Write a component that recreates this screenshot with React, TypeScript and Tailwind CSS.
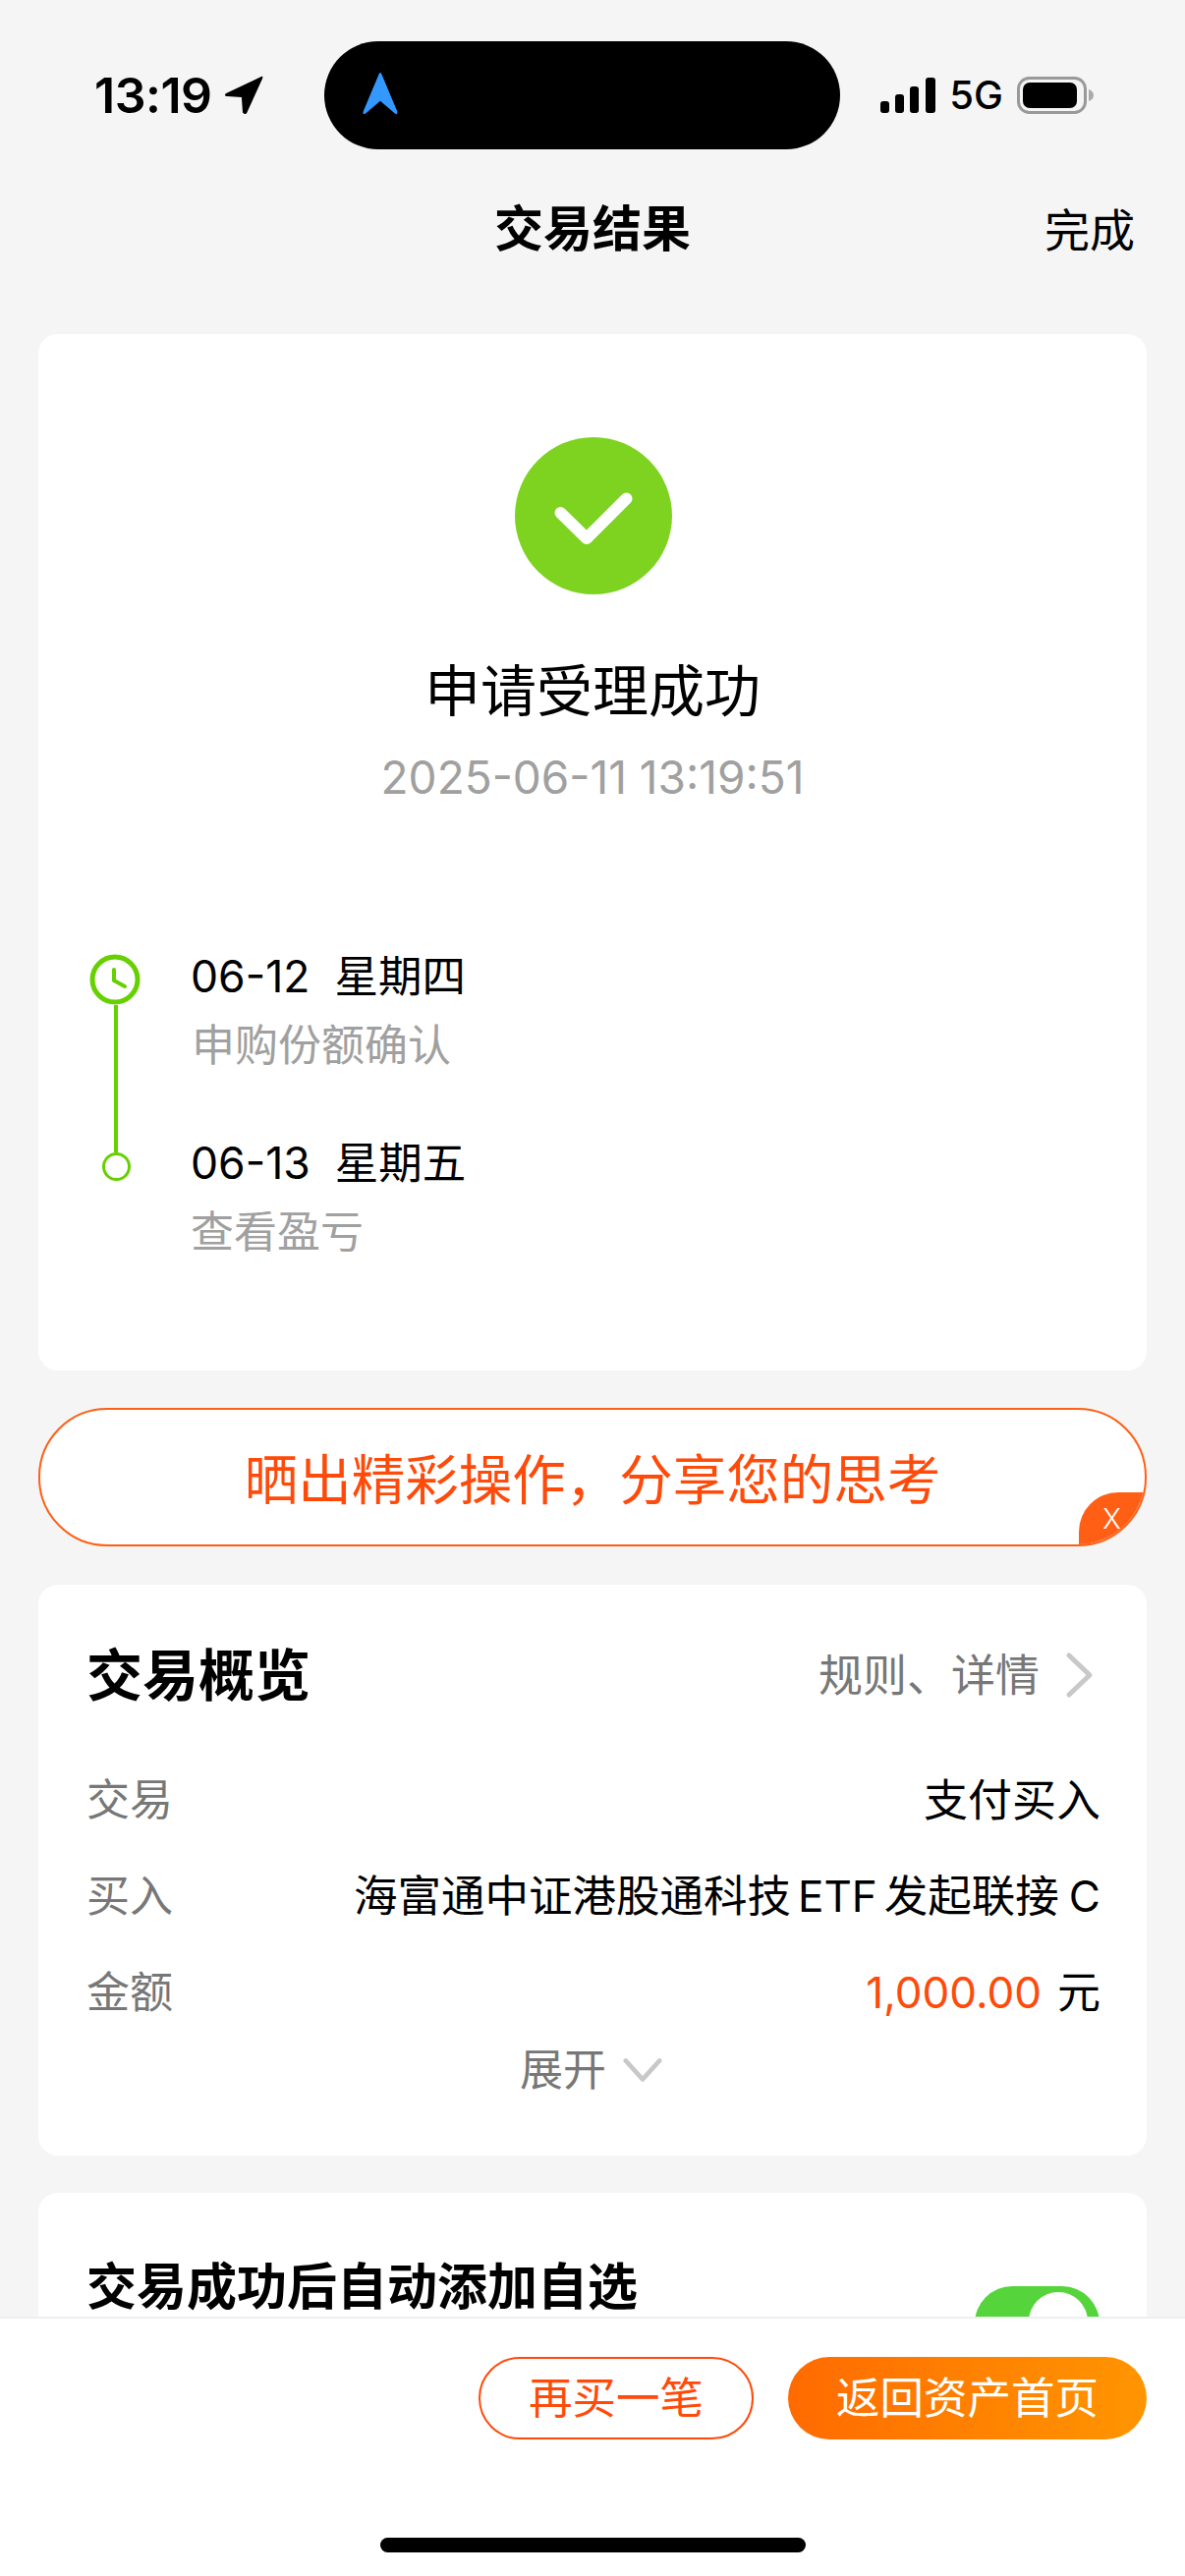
import React from "react";

const font = { fontFamily: '"Inter","Noto Sans CJK SC",sans-serif' };

function Row({ label, children }: { label: string; children: React.ReactNode }) {
  return (
    <div className="flex h-[98px] items-center justify-between text-[44px] leading-none">
      <span className="text-[#777777]">{label}</span>
      <span className="flex items-center text-black">{children}</span>
    </div>
  );
}

export default function App() {
  return (
    <div className="flex h-[2622px] w-[1206px] flex-col overflow-hidden bg-[#f5f5f5]" style={font}>
      <div className="min-h-0 flex-1 overflow-hidden">
        {/* status bar */}
        <div className="flex items-start pl-[96px] pr-[93px] pt-[42px]">
          <div className="flex h-[110px] w-[234px] items-center gap-[12px]">
            <span className="text-[50px] font-semibold leading-none tracking-[-0.5px] text-black">13:19</span>
            <svg width="40" height="40" viewBox="0 0 38 38"><path d="M36 1 2 17c-2 1-1 3 1 3l14 1 1 14c0 2 3 3 4 1L37 3c1-2 0-3-1-2Z" fill="#000" /></svg>
          </div>
          <div className="relative h-[110px] w-[525px] rounded-[55px] bg-black">
            <svg className="absolute left-[37px] top-[31px]" width="40" height="44" viewBox="0 0 40 46"><path d="M20 1c1 0 1 1 2 3l16 38c1 3-1 4-3 2L20 31 5 44c-2 2-4 1-3-2L18 4c1-2 1-3 2-3Z" fill="#3399ff" /></svg>
          </div>
          <div className="flex h-[110px] flex-1 items-center justify-end gap-[14px]">
            <svg width="56" height="36" viewBox="0 0 56 36">
              <rect x="0" y="24" width="9" height="12" rx="3" />
              <rect x="15" y="17" width="9" height="19" rx="3" />
              <rect x="30" y="9" width="9" height="27" rx="3" />
              <rect x="46" y="0" width="10" height="36" rx="3" />
            </svg>
            <span className="text-[40px] font-medium leading-none text-black">5G</span>
            <svg width="78" height="38" viewBox="0 0 78 38">
              <rect x="1.5" y="1.5" width="68" height="35" rx="11" fill="none" stroke="#999" strokeWidth="3" />
              <rect x="6" y="6" width="55" height="26" rx="7" fill="#000" />
              <path d="M73 13c3 1 5 3 5 6s-2 5-5 6Z" fill="#aaa" />
            </svg>
          </div>
        </div>

        {/* nav */}
        <div className="relative mt-[51px] flex h-[60px] items-center justify-center">
          <span className="text-[50px] font-bold leading-none text-black">交易结果</span>
          <span className="absolute right-[51px] top-[8px] text-[46px] leading-none text-black">完成</span>
        </div>

        {/* result card */}
        <div className="mx-[39px] mt-[77px] h-[1055px] rounded-[20px] bg-white">
          <div className="flex flex-col items-center pt-[105px]">
            <div className="ml-[2px] flex h-[160px] w-[160px] items-center justify-center rounded-full bg-[#7ed321]">
              <svg width="80" height="54" viewBox="0 0 80 54" className="mt-[6px]">
                <path d="M6.5 21 33 47 73.5 6.5" fill="none" stroke="#fff" strokeWidth="12" strokeLinecap="round" strokeLinejoin="round" />
              </svg>
            </div>
            <div className="mt-[70px] text-[57px] leading-none text-black">申请受理成功</div>
            <div className="mt-[36px] text-[46px] leading-none text-[#a0a0a0]">2025-06-11 13:19:51</div>
          </div>
          <div className="mt-[157px] flex pl-[52px]">
            <div className="flex w-[52px] flex-col items-center">
              <svg width="52" height="52" viewBox="0 0 52 52">
                <circle cx="26" cy="26" r="23" fill="none" stroke="#66d000" strokeWidth="5" />
                <path d="M25 16v11l11 6" fill="none" stroke="#66d000" strokeWidth="4" strokeLinecap="round" strokeLinejoin="round" />
              </svg>
              <div className="ml-[2px] h-[150px] w-[4px] bg-[#66d000]" />
              <div className="ml-[2px] h-[29px] w-[29px] rounded-full border-[3px] border-[#66d000]" />
            </div>
            <div className="ml-[51px] flex flex-col">
              <div className="h-[44px] text-[44.5px] leading-[46px] text-black">06-12&nbsp;&nbsp;星期四</div>
              <div className="mt-[26px] h-[44px] pl-[1px] text-[44px] leading-[46px] text-[#a0a0a0]">申购份额确认</div>
              <div className="mt-[76px] h-[44px] text-[44.5px] leading-[46px] text-black">06-13&nbsp;&nbsp;星期五</div>
              <div className="mt-[26px] h-[44px] text-[44px] leading-[46px] text-[#a0a0a0]">查看盈亏</div>
            </div>
          </div>
        </div>

        {/* share banner */}
        <div className="relative mx-[39px] mt-[38px] flex h-[141px] items-center justify-center overflow-hidden rounded-[70px] border-2 border-[#ff5f15] bg-white pt-[5px]">
          <span className="text-[54.5px] leading-none text-[#ff4a0a]">晒出精彩操作，分享您的思考</span>
          <div className="absolute bottom-0 right-0 flex h-[53px] w-[67px] items-center justify-center rounded-tl-[40px] bg-[#ff5f15] text-[28px] font-light leading-none text-white">X</div>
        </div>

        {/* overview card */}
        <div className="mx-[39px] mt-[39px] h-[581px] rounded-[20px] bg-white pl-[49px] pr-[47px] pt-[62px]">
          <div className="flex h-[60px] items-center justify-between">
            <span className="text-[57px] font-bold leading-none text-black">交易概览</span>
            <div className="flex items-center">
              <span className="text-[45px] leading-none text-[#777777]">规则、详情</span>
              <svg width="30" height="48" viewBox="0 0 30 48" className="ml-[26px] mr-[6px]">
                <path d="M4 4 25 24 4 44" fill="none" stroke="#c8c8c8" strokeWidth="5" strokeLinecap="round" strokeLinejoin="round" />
              </svg>
            </div>
          </div>
          <div className="mt-[48px] flex flex-col">
            <Row label="交易"><span className="text-[45px]">支付买入</span></Row>
            <Row label="买入">
              <span className="text-[44.5px]">海富通中证港股通科技</span><span className="ml-[7px]">ETF</span><span className="ml-[7px] text-[44.5px]">发起联接</span><span className="ml-[10px]">C</span>
            </Row>
            <Row label="金额">
              <span className="text-[#ff4a0a]">1,000.00</span>
              <span className="ml-[16px]">元</span>
            </Row>
          </div>
          <div className="mt-[8px] flex items-center justify-center gap-[17px] pr-[5px]">
            <span className="text-[44px] leading-none text-[#777777]">展开</span>
            <svg width="40" height="28" viewBox="0 0 42 28">
              <path d="M3 4 21 24 39 4" fill="none" stroke="#c8c8c8" strokeWidth="5" strokeLinecap="round" strokeLinejoin="round" />
            </svg>
          </div>
        </div>

        {/* auto-add card */}
        <div className="mx-[39px] mt-[38px] flex h-[300px] items-start justify-between rounded-[20px] bg-white pl-[49px] pr-[48px] pt-[66px]">
          <span className="text-[51px] font-bold leading-[60px] text-black">交易成功后自动添加自选</span>
          <div className="relative mt-[29px] h-[76px] w-[127px] rounded-full bg-[#55d53b]">
            <div className="absolute right-[12px] top-[6px] h-[60px] w-[60px] rounded-full bg-white" />
          </div>
        </div>
      </div>

      {/* bottom bar */}
      <div className="relative h-[264px] shrink-0 border-t-2 border-[#efefef] bg-white">
        <div className="flex justify-end gap-[35px] pr-[39px] pt-[39px]">
          <div className="flex h-[84px] w-[280px] items-center justify-center rounded-[42px] border-2 border-[#ff4a0a] text-[44.5px] leading-none text-[#ff4a0a]">再买一笔</div>
          <div className="flex h-[84px] w-[365px] items-center justify-center rounded-[42px] bg-gradient-to-r from-[#ff6a00] to-[#ff9500] text-[44.5px] leading-none text-white">返回资产首页</div>
        </div>
        <div className="absolute bottom-[24px] left-[387px] h-[15px] w-[433px] rounded-full bg-black" />
      </div>
    </div>
  );
}
